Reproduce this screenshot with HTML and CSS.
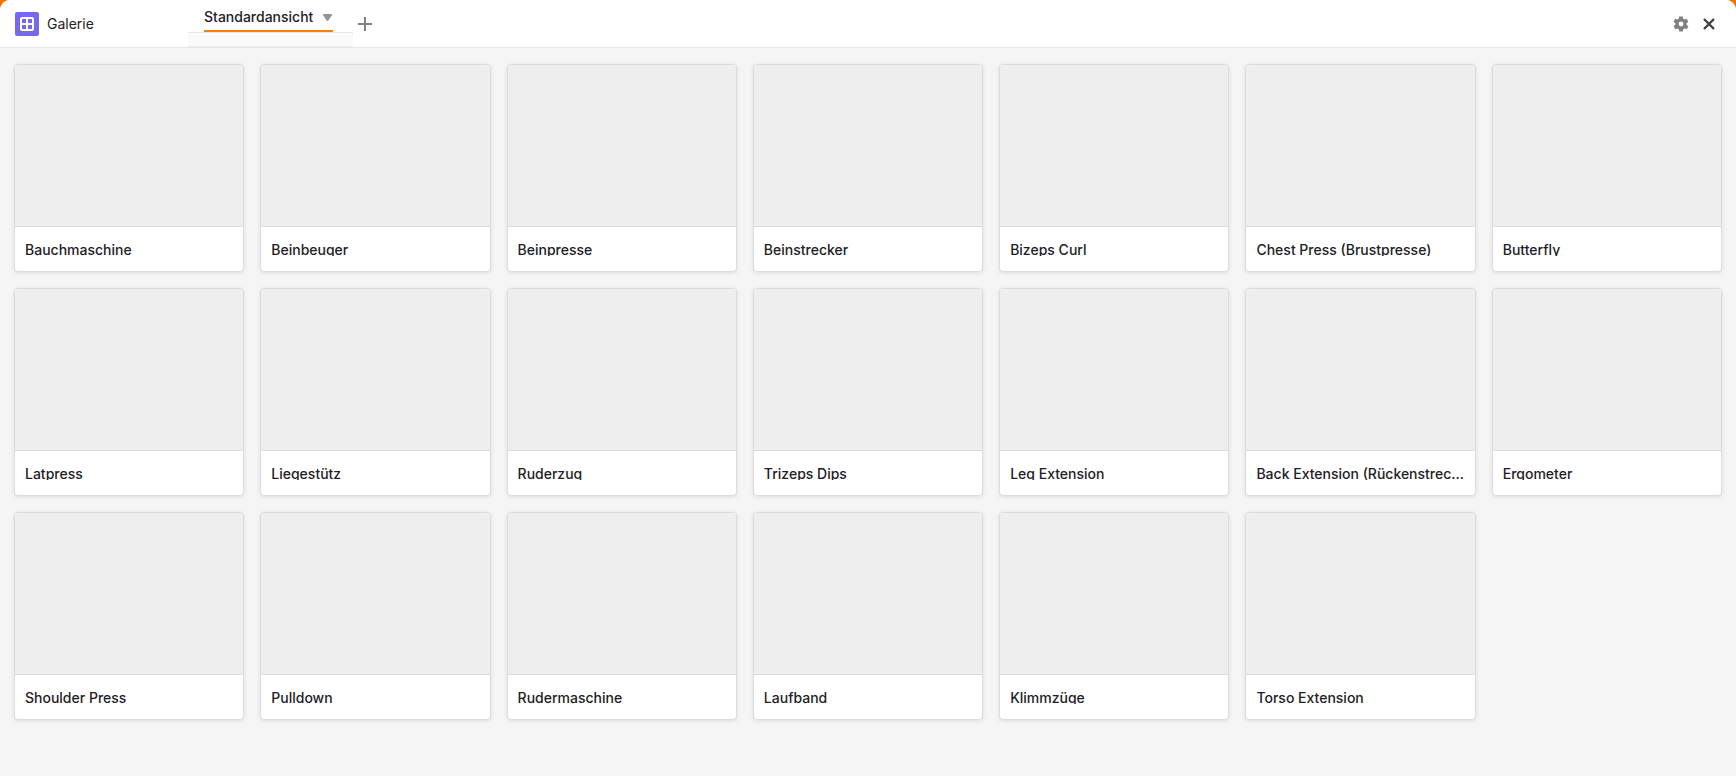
FILE: index.html
```html
<!DOCTYPE html>
<html lang="de">

<head>
    <meta charset="UTF-8">
    <meta name="viewport" content="width=device-width, initial-scale=1.0">
    <title>Galerie</title>
    <link rel="stylesheet" href="styles.css">
</head>

<body>
    <div class="panel">
        <header class="topbar">
            <div class="brand">
                <svg class="brand-icon" viewBox="0 0 24 24" aria-hidden="true">
                    <rect width="24" height="24" rx="2" fill="#7568ee"/>
                    <rect x="6" y="6" width="12" height="12" rx="1" fill="none" stroke="#fff" stroke-width="2"/>
                    <path d="M12 6v12M6 12h12" stroke="#fff" stroke-width="2"/>
                </svg>
                <h1 class="brand-name">Galerie</h1>
            </div>

            <nav class="views">
                <div class="view-tab">
                    <button class="view-button" type="button">
                        Standardansicht
                        <svg class="caret" viewBox="0 0 9 7" aria-hidden="true"><path d="M0 0h9v1L5 7H4L0 1z" fill="#949494"/></svg>
                    </button>
                </div>
                <button class="icon-button add-view" type="button" aria-label="Ansicht hinzufügen">
                    <svg width="14" height="14" viewBox="0 0 14 14"><path d="M7 0v14M0 7h14" stroke="#808080" stroke-width="2"/></svg>
                </button>
            </nav>

            <div class="actions">
                <button class="icon-button" type="button" aria-label="Einstellungen">
                    <svg width="18" height="18" viewBox="0 0 24 24"><path fill="#808080" d="M19.4 13c0-.3.1-.6.1-1s0-.7-.1-1l2.1-1.6c.2-.2.3-.4.1-.7l-2-3.4c-.1-.2-.4-.3-.6-.2l-2.5 1c-.5-.4-1.1-.7-1.700-1l-.4-2.600c0-.3-.2-.5-.5-.5h-4c-.3 0-.5.2-.5.5l-.4 2.600c-.6.3-1.200.6-1.700 1l-2.500-1c-.2-.1-.5 0-.6.2l-2 3.400c-.1.2-.1.5.1.7L4.500 11c0 .3-.1.6-.1 1s0 .7.1 1l-2.100 1.600c-.2.2-.3.4-.1.7l2 3.400c.1.2.4.3.6.2l2.500-1c.5.4 1.100.7 1.700 1l.4 2.600c0 .3.2.5.5.5h4c.3 0 .5-.2.5-.5l.4-2.600c.6-.3 1.200-.6 1.700-1l2.500 1c.2.1.5 0 .6-.2l2-3.400c.1-.2.1-.5-.1-.7zM12 15.200a3.200 3.200 0 1 1 0-6.400 3.200 3.200 0 0 1 0 6.400z"/></svg>
                </button>
                <button class="icon-button" type="button" aria-label="Schließen">
                    <svg width="12" height="12" viewBox="0 0 12 12"><path d="M1 1l10 10M11 1L1 11" stroke="#404040" stroke-width="2.4"/></svg>
                </button>
            </div>
        </header>

        <main class="gallery">
            <article class="card"><div class="card-image"></div><h2 class="card-title">Bauchmaschine</h2></article>
            <article class="card"><div class="card-image"></div><h2 class="card-title">Beinbeuger</h2></article>
            <article class="card"><div class="card-image"></div><h2 class="card-title">Beinpresse</h2></article>
            <article class="card"><div class="card-image"></div><h2 class="card-title">Beinstrecker</h2></article>
            <article class="card"><div class="card-image"></div><h2 class="card-title">Bizeps Curl</h2></article>
            <article class="card"><div class="card-image"></div><h2 class="card-title">Chest Press (Brustpresse)</h2></article>
            <article class="card"><div class="card-image"></div><h2 class="card-title">Butterfly</h2></article>
            <article class="card"><div class="card-image"></div><h2 class="card-title">Latpress</h2></article>
            <article class="card"><div class="card-image"></div><h2 class="card-title">Liegestütz</h2></article>
            <article class="card"><div class="card-image"></div><h2 class="card-title">Ruderzug</h2></article>
            <article class="card"><div class="card-image"></div><h2 class="card-title">Trizeps Dips</h2></article>
            <article class="card"><div class="card-image"></div><h2 class="card-title">Leg Extension</h2></article>
            <article class="card"><div class="card-image"></div><h2 class="card-title">Back Extension (Rückenstrecker)</h2></article>
            <article class="card"><div class="card-image"></div><h2 class="card-title">Ergometer</h2></article>
            <article class="card"><div class="card-image"></div><h2 class="card-title">Shoulder Press</h2></article>
            <article class="card"><div class="card-image"></div><h2 class="card-title">Pulldown</h2></article>
            <article class="card"><div class="card-image"></div><h2 class="card-title">Rudermaschine</h2></article>
            <article class="card"><div class="card-image"></div><h2 class="card-title">Laufband</h2></article>
            <article class="card"><div class="card-image"></div><h2 class="card-title">Klimmzüge</h2></article>
            <article class="card"><div class="card-image"></div><h2 class="card-title">Torso Extension</h2></article>
        </main>
    </div>
</body>

</html>
```
FILE: styles.css
```css
* {
    box-sizing: border-box;
}

body {
    margin: 0;
    background-color: #ee7202;
    color: #1d2125;
    font-family: Inter, "Liberation Sans", sans-serif;
    font-size: 14px;
}

h1,
h2 {
    margin: 0;
    font-size: 14px;
}

button {
    border: none;
    padding: 0;
    background: none;
    color: inherit;
    font: inherit;
    cursor: pointer;
}

.panel {
    min-height: 100vh;
    background-color: #f5f5f5;
    border-radius: 10px 10px 0 0;
    overflow: hidden;
}

/* top bar */
.topbar {
    display: flex;
    height: 48px;
    background-color: #fff;
    border-bottom: 1px solid #e6e6e6;
}

.brand {
    display: flex;
    align-items: center;
    gap: 8px;
    width: 188px;
    padding-left: 15px;
}

.brand-icon {
    width: 24px;
    height: 24px;
}

.brand-name {
    font-weight: 400;
}

.views {
    display: flex;
    flex: 1;
}

.view-tab {
    padding: 0 20px 0 16px;
    background: linear-gradient(#fff 32px, #e6e6e6 32px, #e6e6e6 33px, #fafafa 33px);
    border-bottom: 1px solid #ececec;
}

.view-button {
    display: flex;
    align-items: center;
    gap: 10px;
    height: 32px;
    padding-top: 2px;
    border-bottom: 2px solid #ff8000;
    font-weight: 500;
}

.caret {
    width: 9px;
    height: 7px;
    margin: 2px 1px 0 0;
}

.icon-button {
    display: flex;
    align-items: center;
    justify-content: center;
    width: 24px;
}

.actions {
    display: flex;
    gap: 4px;
    padding-right: 15px;
}

/* cards */
.gallery {
    display: grid;
    grid-template-columns: repeat(auto-fill, minmax(220px, 1fr));
    gap: 16px;
    padding: 16px 14px;
}

.card {
    background-color: #fff;
    border: 1px solid #dcdcdc;
    border-radius: 4px;
    box-shadow: 0 1px 4px rgba(0, 0, 0, 0.1);
    overflow: hidden;
}

.card-image {
    height: 162px;
    background-color: #eee;
    border-bottom: 1px solid #dcdcdc;
}

/* long names are cut with an ellipsis */
.card-title {
    height: 14px;
    margin: 15px 10px;
    font-weight: 500;
    line-height: 16px;
    white-space: nowrap;
    overflow: hidden;
    text-overflow: ellipsis;
}
```
